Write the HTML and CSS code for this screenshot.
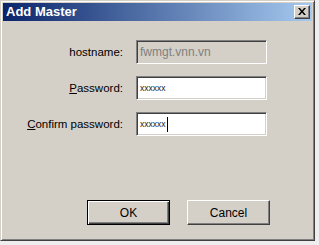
FILE: index.html
```html
<!DOCTYPE html>
<html>
<head>
<meta charset="utf-8">
<link rel="stylesheet" href="styles.css">
</head>
<body>
<div class="window">
  <div class="titlebar">
    <span class="title">Add Master</span>
    <div class="close">
      <svg width="8" height="7" viewBox="0 0 8 7"><path d="M0 0h2l2 2.5 2-2.5h2L5 3.5 8 7H6L4 4.5 2 7H0l3-3.5z" fill="#000"/></svg>
    </div>
  </div>
  <div class="form">
    <div class="row">
      <label class="label">hostname:</label>
      <div class="field disabled"><span class="host">fwmgt.vnn.vn</span></div>
    </div>
    <div class="row">
      <label class="label"><u>P</u>assword:</label>
      <div class="field"><span class="pw">xxxxxx</span></div>
    </div>
    <div class="row">
      <label class="label"><u>C</u>onfirm password:</label>
      <div class="field"><span class="pw">xxxxxx</span><span class="caret"></span></div>
    </div>
  </div>
  <div class="buttons">
    <div class="btn default"><span class="btn-inner">OK</span></div>
    <div class="btn"><span class="btn-inner">Cancel</span></div>
  </div>
</div>
</body>
</html>
```
FILE: styles.css
```css
html, body {
  margin: 0;
  padding: 0;
  background: #eeeeee;
  width: 319px;
  height: 245px;
  overflow: hidden;
}
.window {
  box-sizing: border-box;
  width: 315px;
  height: 241px;
  background: #d4d0c8;
  border: 1px solid;
  border-color: #d4d0c8 #404040 #404040 #d4d0c8;
  box-shadow: inset 1px 1px 0 #ffffff, inset -1px -1px 0 #808080;
  padding: 2px;
  display: flex;
  flex-direction: column;
  font-family: "Liberation Sans", Arial, sans-serif;
}
.titlebar {
  height: 18px;
  background: linear-gradient(to right, #0a246a, #a6caf0);
  display: flex;
  align-items: center;
  justify-content: space-between;
  padding: 0 2px 0 3px;
}
.title {
  color: #ffffff;
  font-weight: bold;
  font-size: 13px;
  line-height: 18px;
}
.close {
  box-sizing: border-box;
  width: 16px;
  height: 14px;
  background: #d4d0c8;
  border: 1px solid;
  border-color: #ffffff #404040 #404040 #ffffff;
  box-shadow: inset -1px -1px 0 #808080;
  display: flex;
  align-items: center;
  justify-content: center;
  padding: 0 1px 1px 0;
}
.form {
  display: flex;
  flex-direction: column;
  gap: 12px;
  padding-top: 19px;
}
.row {
  display: flex;
  align-items: center;
  gap: 13px;
}
.label {
  width: 120px;
  text-align: right;
  font-size: 11.5px;
  color: #000;
}
.field {
  box-sizing: border-box;
  width: 131px;
  height: 24px;
  background: #ffffff;
  border: 1px solid;
  border-color: #808080 #ffffff #ffffff #808080;
  box-shadow: inset 1px 1px 0 #404040, inset -1px -1px 0 #d4d0c8;
  display: flex;
  align-items: center;
  padding-left: 3px;
}
.field.disabled {
  background: #d4d0c8;
}
.host {
  color: #808080;
  font-size: 12px;
}
.pw {
  font-size: 8.5px;
  color: #222;
  letter-spacing: 0;
}
.caret {
  width: 1.5px;
  height: 15px;
  background: #000;
  margin-left: 1px;
}
.buttons {
  display: flex;
  gap: 17px;
  padding-left: 84px;
  margin-top: 64px;
}
.btn {
  box-sizing: border-box;
  width: 83px;
  height: 25px;
  background: #d4d0c8;
  border: 1px solid;
  border-color: #ffffff #404040 #404040 #ffffff;
  box-shadow: inset -1px -1px 0 #808080;
  display: flex;
  font-size: 12px;
}
.btn-inner {
  flex: 1;
  display: flex;
  align-items: center;
  justify-content: center;
}
.btn.default {
  border: 1px solid #000;
  box-shadow: inset 1px 1px 0 #ffffff, inset -1px -1px 0 #404040, inset -2px -2px 0 #808080;
}
```
